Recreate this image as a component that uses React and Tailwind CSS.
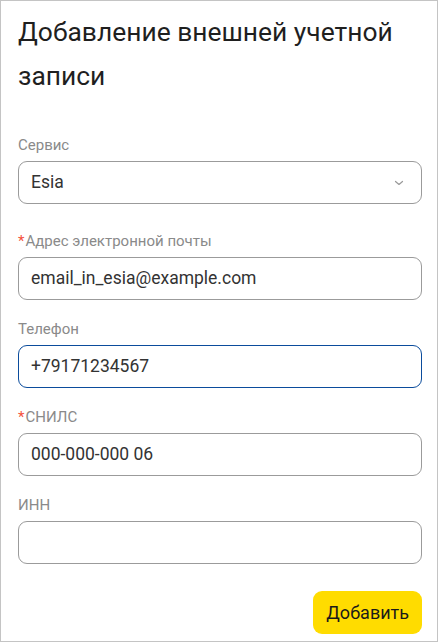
import React from 'react';

const Chevron = () => (
    <svg width="12" height="12" viewBox="0 0 12 12" className="text-[#9a9a9a]">
        <path d="M2.5 4.5 L6 7.5 L9.5 4.5" fill="none" stroke="currentColor" strokeWidth="1.2" strokeLinecap="round" strokeLinejoin="round" />
    </svg>
);

const Field = ({ label, required, value, focused, className = 'mb-[18px]' }) => (
    <div className={className}>
        <div className="h-[22px] mb-[5px] flex items-center text-[15px] text-[#8a8a8a]">
            {required && <span className="text-[#f5503c] mr-[1px]">*</span>}
            {label}
        </div>
        <div
            className={`h-[43px] rounded-[9px] border px-[12px] flex items-center text-[17.5px] text-[#333] ${focused ? 'border-[#0b4c9c]' : 'border-[#9b9b9b]'}`}
        >
            {value}
        </div>
    </div>
);

export default function App() {
    return (
        <div
            className="w-[438px] h-[642px] bg-white border border-[#c4c4c4] pl-[17px] pr-[15px] pt-[9px] flex flex-col"
            style={{ fontFamily: 'Roboto, "Noto Sans", sans-serif' }}
        >
            <h1 className="text-[26.4px] leading-[44px] text-[#1f1f1f] font-normal mb-[36px]">
                Добавление внешней учетной записи
            </h1>

            {/* Сервис */}
            <div className="mb-[26px]">
                <div className="h-[22px] mb-[5px] flex items-center text-[15px] text-[#8a8a8a]">Сервис</div>
                <div className="h-[43px] rounded-[9px] border border-[#9b9b9b] pl-[12px] pr-[16px] flex items-center justify-between text-[17.5px] text-[#333]">
                    <span>Esia</span>
                    <Chevron />
                </div>
            </div>

            <Field label="Адрес электронной почты" required value="email_in_esia@example.com" />
            <Field label="Телефон" value="+79171234567" focused />
            <Field label="СНИЛС" required value="000-000-000 06" />
            <Field label="ИНН" value="" className="mb-[27px]" />

            <div className="flex justify-end">
                <button className="h-[43px] px-[13px] rounded-[9px] bg-[#ffdc00] text-[18px] text-[#1a1a1a]">
                    Добавить
                </button>
            </div>
        </div>
    );
}
